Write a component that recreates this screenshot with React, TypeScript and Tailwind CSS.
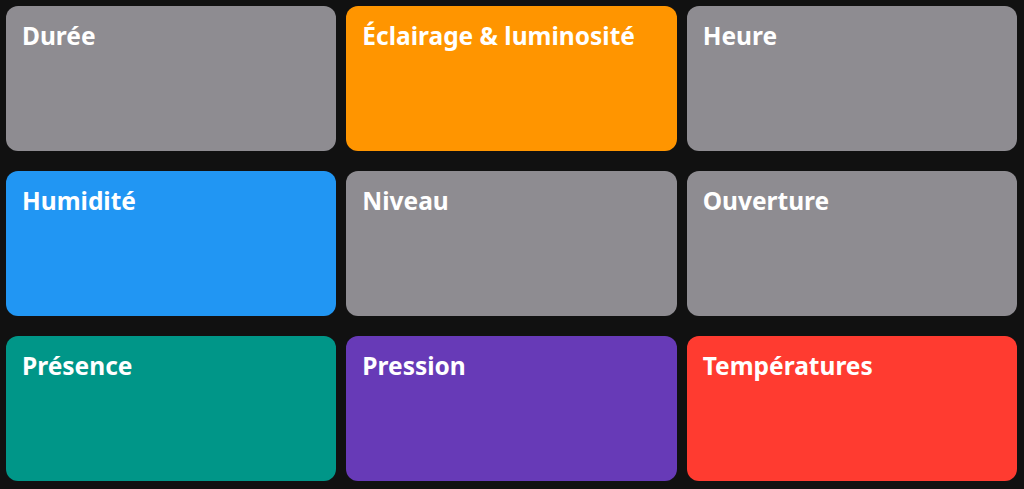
import React from "react";

const tiles = [
  { label: "Durée", bg: "bg-[#8e8c91]" },
  { label: "Éclairage & luminosité", bg: "bg-[#ff9500]" },
  { label: "Heure", bg: "bg-[#8e8c91]" },
  { label: "Humidité", bg: "bg-[#2196f3]" },
  { label: "Niveau", bg: "bg-[#8e8c91]" },
  { label: "Ouverture", bg: "bg-[#8e8c91]" },
  { label: "Présence", bg: "bg-[#009688]" },
  { label: "Pression", bg: "bg-[#673ab7]" },
  { label: "Températures", bg: "bg-[#ff3b30]" },
];

export default function App() {
  return (
    <div className="w-[1024px] h-[489px] bg-[#111111] overflow-hidden">
      <div className="grid grid-cols-3 gap-x-[10px] gap-y-[20px] pt-[6px] pl-[6px] pr-[7px]">
        {tiles.map((t) => (
          <div
            key={t.label}
            className={`${t.bg} h-[145px] rounded-[12px] pl-[16px] pr-[12px] pt-[13px]`}
          >
            <div
              className="text-white text-[24.5px] font-bold leading-[34px]"
              style={{ fontFamily: '"Noto Sans", "Open Sans", sans-serif' }}
            >
              {t.label}
            </div>
          </div>
        ))}
      </div>
    </div>
  );
}
